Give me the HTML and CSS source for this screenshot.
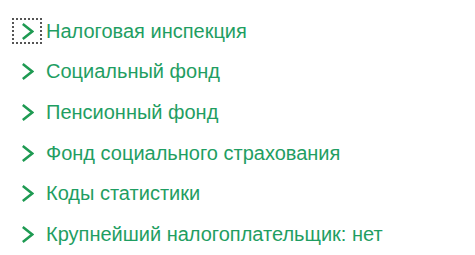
FILE: index.html
```html
<!DOCTYPE html>
<html lang="ru">
<head>
<meta charset="utf-8">
<link rel="stylesheet" href="styles.css">
</head>
<body>
<ul class="list">
  <li class="row"><span class="chev focused"><svg viewBox="0 0 13 19" width="13" height="19"><path d="M1.8 2 L11.2 9.5 L1.8 17" fill="none" stroke="#1e9a52" stroke-width="2.5"/></svg></span><span class="label">Налоговая инспекция</span></li>
  <li class="row"><span class="chev"><svg viewBox="0 0 13 19" width="13" height="19"><path d="M1.8 2 L11.2 9.5 L1.8 17" fill="none" stroke="#1e9a52" stroke-width="2.5"/></svg></span><span class="label">Социальный фонд</span></li>
  <li class="row"><span class="chev"><svg viewBox="0 0 13 19" width="13" height="19"><path d="M1.8 2 L11.2 9.5 L1.8 17" fill="none" stroke="#1e9a52" stroke-width="2.5"/></svg></span><span class="label">Пенсионный фонд</span></li>
  <li class="row"><span class="chev"><svg viewBox="0 0 13 19" width="13" height="19"><path d="M1.8 2 L11.2 9.5 L1.8 17" fill="none" stroke="#1e9a52" stroke-width="2.5"/></svg></span><span class="label">Фонд социального страхования</span></li>
  <li class="row"><span class="chev"><svg viewBox="0 0 13 19" width="13" height="19"><path d="M1.8 2 L11.2 9.5 L1.8 17" fill="none" stroke="#1e9a52" stroke-width="2.5"/></svg></span><span class="label">Коды статистики</span></li>
  <li class="row"><span class="chev"><svg viewBox="0 0 13 19" width="13" height="19"><path d="M1.8 2 L11.2 9.5 L1.8 17" fill="none" stroke="#1e9a52" stroke-width="2.5"/></svg></span><span class="label">Крупнейший налогоплательщик: нет</span></li>
</ul>
</body>
</html>
```

FILE: styles.css
```css
html, body {
  margin: 0;
  padding: 0;
  background: #ffffff;
}
.list {
  list-style: none;
  margin: 0;
  padding: 11px 0 0 12px;
  display: flex;
  flex-direction: column;
}
.row {
  display: flex;
  align-items: center;
  height: 40.6px;
  font-family: "Liberation Sans", Arial, sans-serif;
  font-size: 20px;
  color: #1f9e62;
}
.chev {
  width: 30px;
  height: 26px;
  box-sizing: border-box;
  display: flex;
  align-items: center;
  justify-content: center;
  border: 2px dotted transparent;
  margin-right: 4px;
}
.chev.focused {
  border-color: #555555;
}
.chev svg {
  display: block;
}
.label {
  white-space: nowrap;
}
```
